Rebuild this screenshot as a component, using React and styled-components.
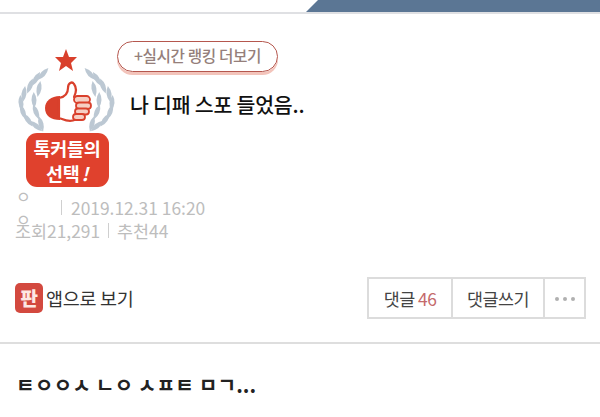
import styled, { createGlobalStyle } from "styled-components";

const GlobalStyle = createGlobalStyle`
  html, body {
    margin: 0;
    padding: 0;
    background: #fff;
    overflow: hidden;
  }
  body {
    font-family: "Noto Sans CJK KR", "Noto Sans", sans-serif;
  }
`;

const leaves = [
  [43, 74, -48], [36, 79, -60], [30, 86, -70], [24, 94, -82], [21, 103, -95],
  [23, 112, -110], [28, 120, -125], [36, 126, -140],
  [39, 89, -80], [34, 100, -92], [36, 112, -112], [41, 124, -105],
];

function Wreath() {
  return (
    <svg width="100" height="87" viewBox="17 46 100 87">
      <polygon
        points="66,49 69,57 77,57 71,63 73,71 66,66 59,71 61,63 55,57 63,57"
        fill="#d9402c"
      />
      <g fill="#bcc8d3">
        {leaves.map(([x, y, r]) => (
          <path key={x + "-" + y} d="M-8 0Q0 -5 8 0Q0 5 -8 0Z" transform={`translate(${x} ${y}) rotate(${r})`} />
        ))}
        {leaves.map(([x, y, r]) => (
          <path key={x + "+" + y} d="M-8 0Q0 -5 8 0Q0 5 -8 0Z" transform={`translate(${133 - x} ${y}) rotate(${-r})`} />
        ))}
      </g>
      <path d="M60 96 C51 96 45 101 45 108 C45 116 51 120 60 120 Z" fill="#d9402c" />
      <path
        d="M59 98 C65 97 68 93 68 88 C68 83 72 81 74 84 C77 88 76 93 74 97 L81 98 L81 116 C76 121 69 122 62 119 L59 118 Z"
        fill="#fff"
        stroke="#d9402c"
        strokeWidth="2.2"
        strokeLinejoin="round"
      />
      <g fill="#f6cfc4" stroke="#d9402c" strokeWidth="1.8">
        <rect x="74" y="96" width="16" height="7" rx="3.5" />
        <rect x="76" y="102.5" width="15" height="6.5" rx="3.2" />
        <rect x="75" y="108.5" width="14" height="6" rx="3" />
        <rect x="73" y="114" width="12" height="6" rx="3" />
      </g>
    </svg>
  );
}

function App() {
  return (
    <>
      <GlobalStyle />
      <Page>
        <TopBar>
          <TopTab />
        </TopBar>
        <Header>
          <Badge>
            <Wreath />
            <BadgeBox>
              톡커들의
              <br />
              선택<em>!</em>
            </BadgeBox>
          </Badge>
          <HeaderBody>
            <RankPill>+실시간 랭킹 더보기</RankPill>
            <Title>나 디패 스포 들었음..</Title>
          </HeaderBody>
        </Header>
        <Meta>
          <MetaRow>
            <Author>ㅇㅇ</Author>
            <Sep $wide />
            2019.12.31 16:20
          </MetaRow>
          <MetaRow>
            조회21,291
            <Sep />
            추천44
          </MetaRow>
        </Meta>
        <Actions>
          <AppLink>
            <AppIcon>판</AppIcon>
            앱으로 보기
          </AppLink>
          <ButtonGroup>
            <Cell $width={84}>
              댓글&nbsp;<Count>46</Count>
            </Cell>
            <Cell $width={92}>댓글쓰기</Cell>
            <MoreCell>
              <Dot />
              <Dot />
              <Dot />
            </MoreCell>
          </ButtonGroup>
        </Actions>
        <NextPost>ㅌㅇㅇㅅ ㄴㅇ ㅅㅍㅌ ㅁㄱ...</NextPost>
      </Page>
    </>
  );
}

export default App;

const Page = styled.div`
  width: 600px;
  height: 417px;
  overflow: hidden;
  background: #fff;
`;

const TopBar = styled.div`
  height: 12px;
  display: flex;
  justify-content: flex-end;
  border-bottom: 2px solid #dfe0e3;
`;

const TopTab = styled.div`
  width: 294px;
  height: 12px;
  background: #5b7694;
  clip-path: polygon(12px 0, 100% 0, 100% 100%, 0 100%);
`;

const Header = styled.div`
  display: flex;
  align-items: flex-start;
  padding: 27px 0 0 17px;
`;

const Badge = styled.div`
  width: 100px;
  margin-top: 5px;
  display: flex;
  flex-direction: column;
  align-items: center;
  flex-shrink: 0;

  svg {
    display: block;
  }
`;

const BadgeBox = styled.div`
  width: 83px;
  height: 54px;
  box-sizing: border-box;
  padding-top: 3px;
  border-radius: 11px;
  background: #e0412d;
  color: #fff;
  font-size: 18.5px;
  font-weight: 700;
  line-height: 25px;
  letter-spacing: -0.3px;
  text-align: center;

  em {
    font-style: italic;
    margin-left: 2px;
  }
`;

const HeaderBody = styled.div`
  display: flex;
  flex-direction: column;
  align-items: flex-start;
`;

const RankPill = styled.div`
  width: 161px;
  height: 31px;
  box-sizing: border-box;
  border: 1.5px solid #b5574e;
  border-radius: 16px;
  box-shadow: 0 3px 0 #f3c4bb;
  color: #957f7b;
  font-size: 15.7px;
  font-weight: 500;
  line-height: 27px;
  letter-spacing: -0.4px;
  text-align: center;
`;

const Title = styled.h1`
  margin: 18px 0 0 13px;
  color: #111;
  font-size: 20.5px;
  font-weight: 500;
  line-height: 28px;
  letter-spacing: -0.2px;
`;

const Meta = styled.div`
  margin-top: 9px;
  padding-left: 15px;
  color: #bdbdbd;
  font-size: 17.4px;
  line-height: 23px;
`;

const MetaRow = styled.div`
  display: flex;
  align-items: center;
  height: 23px;
`;

const Author = styled.span`
  margin-left: 1px;
  width: 28px;
  font-size: 16px;
`;

const Sep = styled.i`
  display: block;
  width: 1px;
  height: 15px;
  background: #cfcfcf;
  margin: ${(p) => (p.$wide ? "0 9px 0 17px" : "0 8px")};
`;

const Actions = styled.div`
  margin-top: 35px;
  padding: 0 14px 23px 15px;
  height: 42px;
  display: flex;
  justify-content: space-between;
  align-items: center;
  border-bottom: 2px solid #dedede;
`;

const AppLink = styled.div`
  display: flex;
  align-items: center;
  gap: 3px;
  color: #333;
  font-size: 18.5px;
  letter-spacing: -0.3px;
`;

const AppIcon = styled.span`
  width: 28px;
  height: 30px;
  border-radius: 5px;
  background: #d3493f;
  color: #fde8e4;
  font-size: 19px;
  font-weight: 900;
  line-height: 29px;
  text-align: center;
`;

const ButtonGroup = styled.div`
  display: flex;
  width: 219px;
  height: 42px;
  border: 2px solid #dcdcdc;
  box-sizing: border-box;
`;

const Cell = styled.div`
  width: ${(p) => p.$width}px;
  box-sizing: border-box;
  display: flex;
  align-items: center;
  justify-content: center;
  border-right: 2px solid #dcdcdc;
  color: #444;
  font-size: 17.4px;
  letter-spacing: -0.5px;
`;

const Count = styled.span`
  color: #c4696b;
`;

const MoreCell = styled.div`
  flex: 1;
  display: flex;
  align-items: center;
  justify-content: center;
  gap: 4px;
  padding-top: 2px;
`;

const Dot = styled.i`
  width: 4px;
  height: 4px;
  border-radius: 50%;
  background: #b0b0b0;
`;

const NextPost = styled.div`
  margin: 26px 0 0 16px;
  color: #222;
  font-size: 20.4px;
  font-weight: 700;
  line-height: 28px;
`;
